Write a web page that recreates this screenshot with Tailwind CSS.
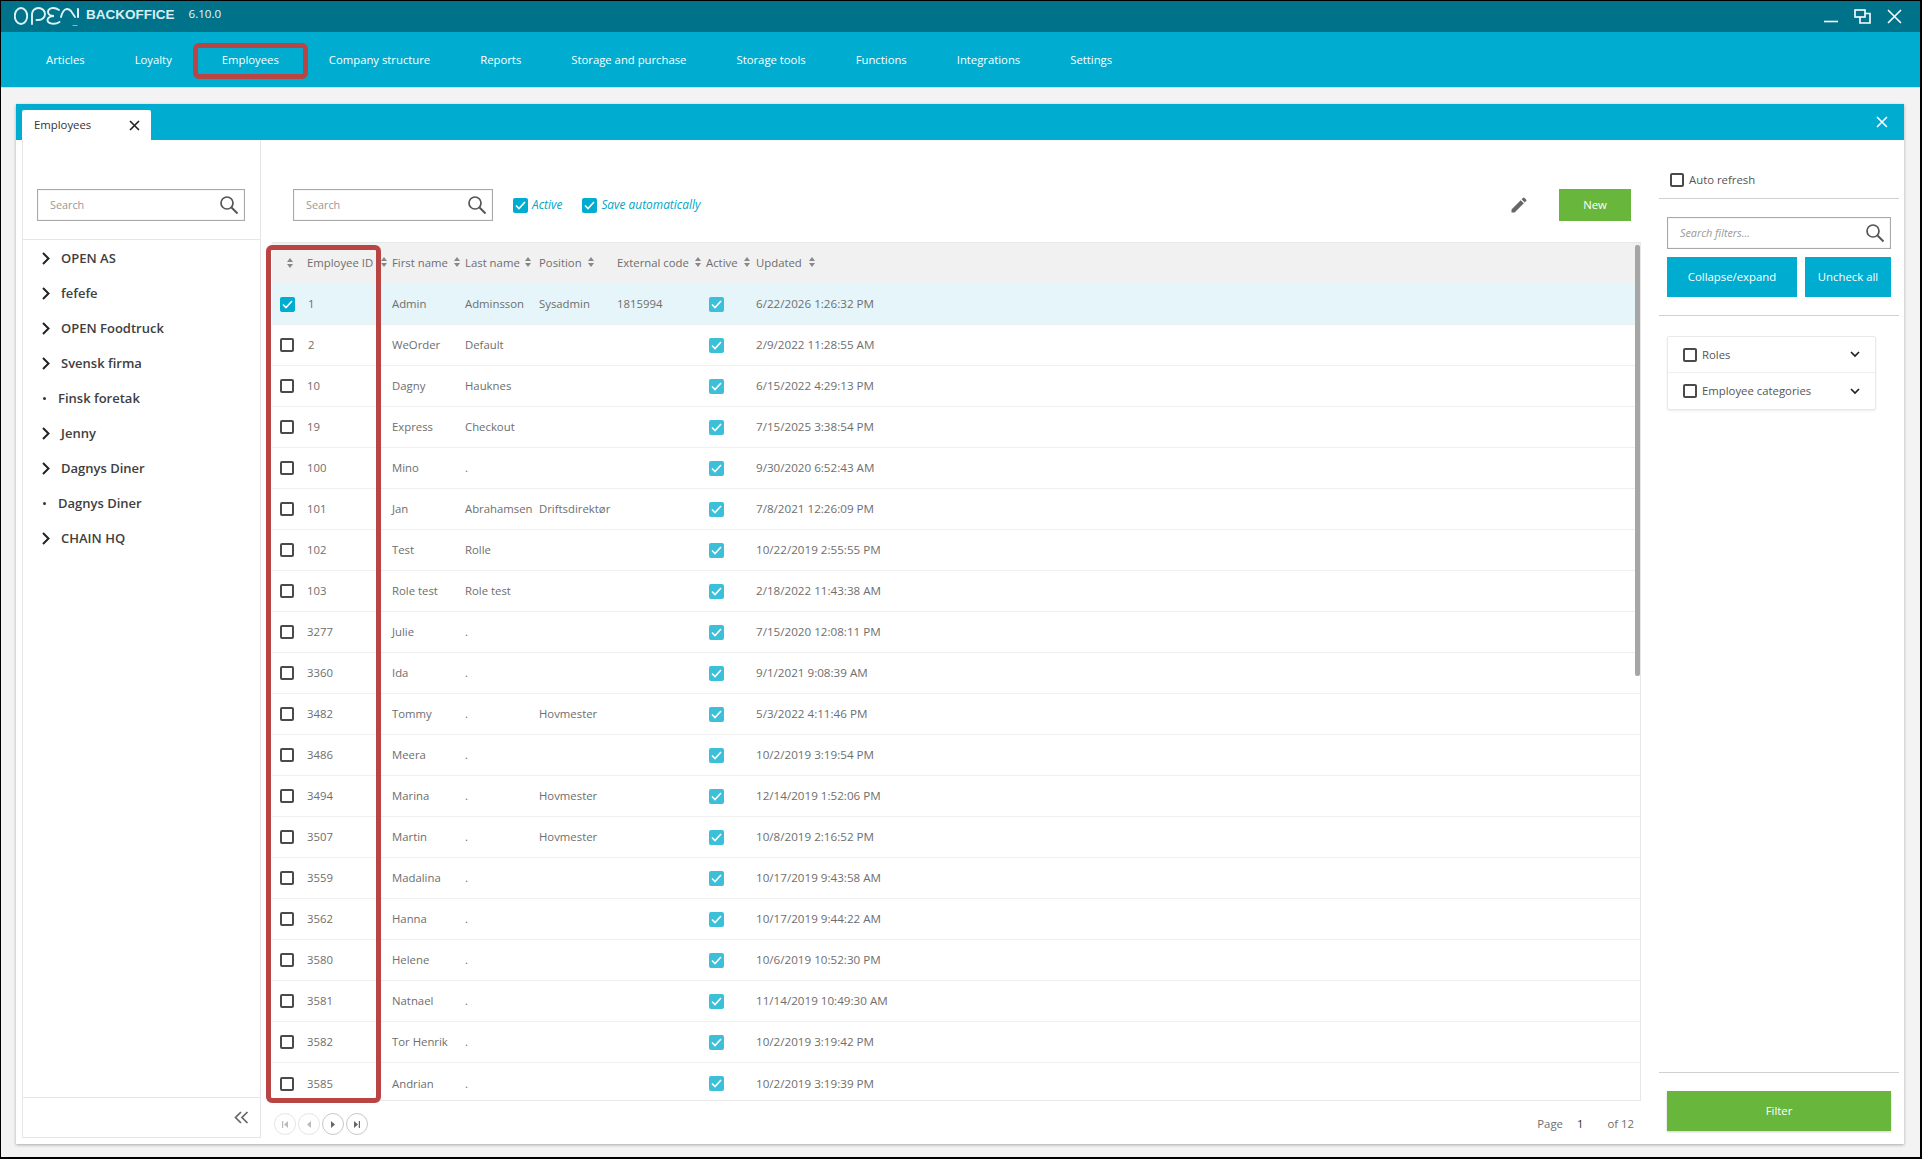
<!DOCTYPE html>
<html><head><meta charset="utf-8"><script src="https://cdn.jsdelivr.net/npm/@tailwindcss/browser@4"></script></head>
<body>
<div class="relative w-[1922px] h-[1159px] bg-black pt-px pl-px pr-[2px] pb-[2px] flex flex-col overflow-hidden font-['Open_Sans',sans-serif] text-[11.35px] text-[#6e6e6e]">
  <!-- title bar -->
  <div class="h-[31px] bg-[#00728a] flex items-center text-white shrink-0">
    <svg class="ml-[13px] mt-[1px]" width="68" height="26" viewBox="0 0 68 26" fill="none" stroke="#dff3f6" stroke-width="1.9" stroke-linecap="round"><ellipse cx="7" cy="12" rx="6.2" ry="8"/><path d="M18 20 V10 a6.5 6 0 1 1 6.5 6 h-2"/><path d="M45 6 C40 2.5 34 4 34 8 C34 11 37 12 40 12 C36 12 33.5 14 33.5 16 C33.5 20 41 21 45.5 18"/><path d="M47 13 C49 5 53 3 57 7 L61 13"/><path d="M64 5 V13" stroke-width="2"/><path d="M59 21.5 H63" stroke-width="0.8" stroke="#9fd3dc"/></svg>
    <span class="ml-[4px] mb-[3px] text-[13.5px] font-semibold text-[#d8f0f5] font-['Liberation_Sans',sans-serif]">BACKOFFICE</span>
    <span class="ml-[14px] mb-[5px] text-[11.6px] text-[#e6f6f9]">6.10.0</span>
    <div class="ml-auto flex items-center pr-[18px] gap-[16px]">
      <svg width="15" height="15" viewBox="0 0 15 15"><path d="M1 12.5 H15" stroke="#fff" stroke-width="1.6"/></svg>
      <svg width="17" height="15" viewBox="0 0 17 15" fill="none" stroke="#fff" stroke-width="1.6"><rect x="1" y="1" width="10" height="7"/><path d="M11 4.5 H16 V14 H6 V8"/></svg>
      <svg width="15" height="15" viewBox="0 0 15 15" fill="none" stroke="#fff" stroke-width="1.6"><path d="M1 1 L14 14 M14 1 L1 14"/></svg>
    </div>
  </div>
  <!-- nav -->
  <div class="h-[56px] bg-[#00acd0] flex items-center gap-[50px] pl-[45px] pt-px text-white text-[11.3px] shrink-0 border-b border-[#d9d9d9]">
    <span>Articles</span><span>Loyalty</span><span>Employees</span><span>Company structure</span><span>Reports</span><span>Storage and purchase</span><span>Storage tools</span><span>Functions</span><span>Integrations</span><span>Settings</span>
  </div>
  <!-- workspace -->
  <div class="flex-1 bg-[#f3f3f3] pt-[16px] pl-[15px] pr-[16px] pb-[13px] flex min-h-0">
    <div class="flex-1 flex flex-col bg-white shadow-[0_1px_3px_rgba(0,0,0,0.3)] min-w-0">
      <div class="h-[36px] bg-[#00acd0] shrink-0 flex items-end pl-[6px] pr-[16px]">
        <div class="w-[129px] h-[30px] bg-white flex items-center justify-between pl-[12px] pr-[11px] text-[#333] rounded-t-[2px]">
          <span>Employees</span>
          <svg width="11" height="11" viewBox="0 0 11 11" fill="none" stroke="#222" stroke-width="1.6"><path d="M1 1 L10 10 M10 1 L1 10"/></svg>
        </div>
        <svg class="ml-auto self-center" width="12" height="12" viewBox="0 0 12 12" fill="none" stroke="#fff" stroke-width="1.6"><path d="M1 1 L11 11 M11 1 L1 11"/></svg>
      </div>
      <div class="flex-1 flex min-h-0">
        <!-- tree -->
        <div class="ml-[6px] mb-[6px] w-[239px] shrink-0 border border-t-0 border-[#e6e6e6] flex flex-col">
          <div class="h-[100px] shrink-0 border-b border-[#e6e6e6] pl-[14px] pt-[49px]">
            <div class="w-[208px] h-[32px] border border-[#a8a8a8] shadow-[inset_0_0_1px_#aaa] flex items-center justify-between pl-[12px] pr-[5px] text-[#999] text-[10.8px]">
              <span>Search</span>
              <svg width="20" height="20" viewBox="0 0 20 20" fill="none" stroke="#555" stroke-width="1.7"><circle cx="8" cy="8" r="6"/><path d="M12.5 12.5 L18.5 18.5" stroke-width="2"/></svg>
            </div>
          </div>
          <div class="flex-1 pt-px text-[13px] font-semibold text-[#404040]">
            <div class="h-[35px] flex items-center pl-[19px] gap-[11px]"><svg width="8" height="13" viewBox="0 0 8 13" fill="none" stroke="#222" stroke-width="2"><path d="M1 1 L6.5 6.5 L1 12"/></svg><span>OPEN AS</span></div>
            <div class="h-[35px] flex items-center pl-[19px] gap-[11px]"><svg width="8" height="13" viewBox="0 0 8 13" fill="none" stroke="#222" stroke-width="2"><path d="M1 1 L6.5 6.5 L1 12"/></svg><span>fefefe</span></div>
            <div class="h-[35px] flex items-center pl-[19px] gap-[11px]"><svg width="8" height="13" viewBox="0 0 8 13" fill="none" stroke="#222" stroke-width="2"><path d="M1 1 L6.5 6.5 L1 12"/></svg><span>OPEN Foodtruck</span></div>
            <div class="h-[35px] flex items-center pl-[19px] gap-[11px]"><svg width="8" height="13" viewBox="0 0 8 13" fill="none" stroke="#222" stroke-width="2"><path d="M1 1 L6.5 6.5 L1 12"/></svg><span>Svensk firma</span></div>
            <div class="h-[35px] flex items-center pl-[20px] gap-[12px]"><span class="w-[3px] h-[3px] rounded-full bg-[#333]"></span><span>Finsk foretak</span></div>
            <div class="h-[35px] flex items-center pl-[19px] gap-[11px]"><svg width="8" height="13" viewBox="0 0 8 13" fill="none" stroke="#222" stroke-width="2"><path d="M1 1 L6.5 6.5 L1 12"/></svg><span>Jenny</span></div>
            <div class="h-[35px] flex items-center pl-[19px] gap-[11px]"><svg width="8" height="13" viewBox="0 0 8 13" fill="none" stroke="#222" stroke-width="2"><path d="M1 1 L6.5 6.5 L1 12"/></svg><span>Dagnys Diner</span></div>
            <div class="h-[35px] flex items-center pl-[20px] gap-[12px]"><span class="w-[3px] h-[3px] rounded-full bg-[#333]"></span><span>Dagnys Diner</span></div>
            <div class="h-[35px] flex items-center pl-[19px] gap-[11px]"><svg width="8" height="13" viewBox="0 0 8 13" fill="none" stroke="#222" stroke-width="2"><path d="M1 1 L6.5 6.5 L1 12"/></svg><span>CHAIN HQ</span></div>
          </div>
          <div class="h-[40px] shrink-0 border-t border-[#e6e6e6] flex items-center justify-end pr-[11px]">
            <svg width="15" height="13" viewBox="0 0 15 13" fill="none" stroke="#666" stroke-width="1.7"><path d="M7 1 L1.5 6.5 L7 12 M13.5 1 L8 6.5 L13.5 12"/></svg>
          </div>
        </div>
        <!-- main -->
        <div class="flex-1 flex flex-col min-w-0 pl-[11px] pr-[10px]">
          <div class="h-[102px] shrink-0 pt-[49px] flex items-start pl-[21px] pr-[10px]">
            <div class="w-[200px] h-[32px] border border-[#a8a8a8] shadow-[inset_0_0_1px_#aaa] flex items-center justify-between pl-[12px] pr-[5px] text-[#999] text-[10.8px]">
              <span>Search</span>
              <svg width="20" height="20" viewBox="0 0 20 20" fill="none" stroke="#555" stroke-width="1.7"><circle cx="8" cy="8" r="6"/><path d="M12.5 12.5 L18.5 18.5" stroke-width="2"/></svg>
            </div>
            <div class="h-[32px] flex items-center ml-[20px] gap-[4px] text-[#00a5c8] italic text-[11.9px]">
              <span class="w-[15px] h-[15px] rounded-[2px] bg-[#00acd0] flex items-center justify-center"><svg width="11" height="9" viewBox="0 0 11 9" fill="none" stroke="#fff" stroke-width="1.6"><path d="M1 4.5 L4 7.5 L10 1"/></svg></span><span>Active</span>
            </div>
            <div class="h-[32px] flex items-center ml-[20px] gap-[4px] text-[#00a5c8] italic text-[11.9px]">
              <span class="w-[15px] h-[15px] rounded-[2px] bg-[#00acd0] flex items-center justify-center"><svg width="11" height="9" viewBox="0 0 11 9" fill="none" stroke="#fff" stroke-width="1.6"><path d="M1 4.5 L4 7.5 L10 1"/></svg></span><span>Save automatically</span>
            </div>
            <div class="ml-auto h-[32px] flex items-center gap-[30px]">
              <svg width="20" height="20" viewBox="0 0 24 24" fill="#666"><path d="M3 17.25V21h3.75L17.81 9.94l-3.75-3.75L3 17.25zM20.71 7.04a1 1 0 0 0 0-1.41l-2.34-2.34a1 1 0 0 0-1.41 0l-1.83 1.83 3.75 3.75 1.83-1.83z"/></svg>
              <div class="w-[72px] h-[32px] bg-[#69b63c] text-white flex items-center justify-center">New</div>
            </div>
          </div>
          <!-- table -->
          <div class="relative h-[859px] shrink-0 overflow-hidden border-t border-r border-b border-[#e8e8e8]">
            <div class="absolute right-0 top-[2px] w-[5px] h-[431px] bg-[#a6a6a6] rounded-[2px] z-10"></div>
            <div class="h-[41px] pb-[2px] bg-[#f1f1f1] grid grid-cols-[35px_85px_73px_74px_78px_89px_50px_1fr] items-center">
              <div class="pl-[15px]"><svg width="6" height="10" viewBox="0 0 6 10" fill="#888"><path d="M3 0 L6 4 H0 Z M3 10 L6 6 H0 Z"/></svg></div>
              <div class="flex items-center justify-between pr-[5px]"><span>Employee ID</span><svg width="6" height="10" viewBox="0 0 6 10" fill="#888"><path d="M3 0 L6 4 H0 Z M3 10 L6 6 H0 Z"/></svg></div>
              <div class="flex items-center justify-between pr-[5px]"><span>First name</span><svg width="6" height="10" viewBox="0 0 6 10" fill="#888"><path d="M3 0 L6 4 H0 Z M3 10 L6 6 H0 Z"/></svg></div>
              <div class="flex items-center justify-between pr-[8px]"><span>Last name</span><svg width="6" height="10" viewBox="0 0 6 10" fill="#888"><path d="M3 0 L6 4 H0 Z M3 10 L6 6 H0 Z"/></svg></div>
              <div class="flex items-center justify-between pr-[23px]"><span>Position</span><svg width="6" height="10" viewBox="0 0 6 10" fill="#888"><path d="M3 0 L6 4 H0 Z M3 10 L6 6 H0 Z"/></svg></div>
              <div class="flex items-center justify-between pr-[5px]"><span>External code</span><svg width="6" height="10" viewBox="0 0 6 10" fill="#888"><path d="M3 0 L6 4 H0 Z M3 10 L6 6 H0 Z"/></svg></div>
              <div class="flex items-center justify-between pr-[6px]"><span>Active</span><svg width="6" height="10" viewBox="0 0 6 10" fill="#888"><path d="M3 0 L6 4 H0 Z M3 10 L6 6 H0 Z"/></svg></div>
              <div class="flex items-center justify-between w-[59px]"><span>Updated</span><svg width="6" height="10" viewBox="0 0 6 10" fill="#888"><path d="M3 0 L6 4 H0 Z M3 10 L6 6 H0 Z"/></svg></div>
            </div>
            <div class="divide-y divide-[#efefef] border-b border-[#efefef] [&>div]:h-[41px] [&>div]:grid [&>div]:grid-cols-[35px_85px_73px_74px_78px_89px_50px_1fr] [&>div]:items-center">
              <div class="bg-[#e5f5fa]"><div class="pl-[8px]"><span class="w-[15px] h-[15px] rounded-[2px] bg-[#00acd0] flex items-center justify-center"><svg width="11" height="9" viewBox="0 0 11 9" fill="none" stroke="#fff" stroke-width="1.6"><path d="M1 4.5 L4 7.5 L10 1"/></svg></span></div><div class="pl-px">1</div><div>Admin</div><div>Adminsson</div><div>Sysadmin</div><div>1815994</div><div class="pl-[3px]"><span class="w-[15px] h-[15px] rounded-[2px] bg-[#3cc0da] flex items-center justify-center"><svg width="11" height="9" viewBox="0 0 11 9" fill="none" stroke="#fff" stroke-width="1.6"><path d="M1 4.5 L4 7.5 L10 1"/></svg></span></div><div class="text-[11.65px]">6/22/2026 1:26:32 PM</div></div>
              <div><div class="pl-[8px]"><span class="block w-[14px] h-[14px] border-2 border-[#4a4a4a] rounded-[2px]"></span></div><div class="pl-px">2</div><div>WeOrder</div><div>Default</div><div></div><div></div><div class="pl-[3px]"><span class="w-[15px] h-[15px] rounded-[2px] bg-[#3cc0da] flex items-center justify-center"><svg width="11" height="9" viewBox="0 0 11 9" fill="none" stroke="#fff" stroke-width="1.6"><path d="M1 4.5 L4 7.5 L10 1"/></svg></span></div><div class="text-[11.65px]">2/9/2022 11:28:55 AM</div></div>
              <div><div class="pl-[8px]"><span class="block w-[14px] h-[14px] border-2 border-[#4a4a4a] rounded-[2px]"></span></div><div>10</div><div>Dagny</div><div>Hauknes</div><div></div><div></div><div class="pl-[3px]"><span class="w-[15px] h-[15px] rounded-[2px] bg-[#3cc0da] flex items-center justify-center"><svg width="11" height="9" viewBox="0 0 11 9" fill="none" stroke="#fff" stroke-width="1.6"><path d="M1 4.5 L4 7.5 L10 1"/></svg></span></div><div class="text-[11.65px]">6/15/2022 4:29:13 PM</div></div>
              <div><div class="pl-[8px]"><span class="block w-[14px] h-[14px] border-2 border-[#4a4a4a] rounded-[2px]"></span></div><div>19</div><div>Express</div><div>Checkout</div><div></div><div></div><div class="pl-[3px]"><span class="w-[15px] h-[15px] rounded-[2px] bg-[#3cc0da] flex items-center justify-center"><svg width="11" height="9" viewBox="0 0 11 9" fill="none" stroke="#fff" stroke-width="1.6"><path d="M1 4.5 L4 7.5 L10 1"/></svg></span></div><div class="text-[11.65px]">7/15/2025 3:38:54 PM</div></div>
              <div><div class="pl-[8px]"><span class="block w-[14px] h-[14px] border-2 border-[#4a4a4a] rounded-[2px]"></span></div><div>100</div><div>Mino</div><div>.</div><div></div><div></div><div class="pl-[3px]"><span class="w-[15px] h-[15px] rounded-[2px] bg-[#3cc0da] flex items-center justify-center"><svg width="11" height="9" viewBox="0 0 11 9" fill="none" stroke="#fff" stroke-width="1.6"><path d="M1 4.5 L4 7.5 L10 1"/></svg></span></div><div class="text-[11.65px]">9/30/2020 6:52:43 AM</div></div>
              <div><div class="pl-[8px]"><span class="block w-[14px] h-[14px] border-2 border-[#4a4a4a] rounded-[2px]"></span></div><div>101</div><div>Jan</div><div>Abrahamsen</div><div>Driftsdirektør</div><div></div><div class="pl-[3px]"><span class="w-[15px] h-[15px] rounded-[2px] bg-[#3cc0da] flex items-center justify-center"><svg width="11" height="9" viewBox="0 0 11 9" fill="none" stroke="#fff" stroke-width="1.6"><path d="M1 4.5 L4 7.5 L10 1"/></svg></span></div><div class="text-[11.65px]">7/8/2021 12:26:09 PM</div></div>
              <div><div class="pl-[8px]"><span class="block w-[14px] h-[14px] border-2 border-[#4a4a4a] rounded-[2px]"></span></div><div>102</div><div>Test</div><div>Rolle</div><div></div><div></div><div class="pl-[3px]"><span class="w-[15px] h-[15px] rounded-[2px] bg-[#3cc0da] flex items-center justify-center"><svg width="11" height="9" viewBox="0 0 11 9" fill="none" stroke="#fff" stroke-width="1.6"><path d="M1 4.5 L4 7.5 L10 1"/></svg></span></div><div class="text-[11.65px]">10/22/2019 2:55:55 PM</div></div>
              <div><div class="pl-[8px]"><span class="block w-[14px] h-[14px] border-2 border-[#4a4a4a] rounded-[2px]"></span></div><div>103</div><div>Role test</div><div>Role test</div><div></div><div></div><div class="pl-[3px]"><span class="w-[15px] h-[15px] rounded-[2px] bg-[#3cc0da] flex items-center justify-center"><svg width="11" height="9" viewBox="0 0 11 9" fill="none" stroke="#fff" stroke-width="1.6"><path d="M1 4.5 L4 7.5 L10 1"/></svg></span></div><div class="text-[11.65px]">2/18/2022 11:43:38 AM</div></div>
              <div><div class="pl-[8px]"><span class="block w-[14px] h-[14px] border-2 border-[#4a4a4a] rounded-[2px]"></span></div><div>3277</div><div>Julie</div><div>.</div><div></div><div></div><div class="pl-[3px]"><span class="w-[15px] h-[15px] rounded-[2px] bg-[#3cc0da] flex items-center justify-center"><svg width="11" height="9" viewBox="0 0 11 9" fill="none" stroke="#fff" stroke-width="1.6"><path d="M1 4.5 L4 7.5 L10 1"/></svg></span></div><div class="text-[11.65px]">7/15/2020 12:08:11 PM</div></div>
              <div><div class="pl-[8px]"><span class="block w-[14px] h-[14px] border-2 border-[#4a4a4a] rounded-[2px]"></span></div><div>3360</div><div>Ida</div><div>.</div><div></div><div></div><div class="pl-[3px]"><span class="w-[15px] h-[15px] rounded-[2px] bg-[#3cc0da] flex items-center justify-center"><svg width="11" height="9" viewBox="0 0 11 9" fill="none" stroke="#fff" stroke-width="1.6"><path d="M1 4.5 L4 7.5 L10 1"/></svg></span></div><div class="text-[11.65px]">9/1/2021 9:08:39 AM</div></div>
              <div><div class="pl-[8px]"><span class="block w-[14px] h-[14px] border-2 border-[#4a4a4a] rounded-[2px]"></span></div><div>3482</div><div>Tommy</div><div>.</div><div>Hovmester</div><div></div><div class="pl-[3px]"><span class="w-[15px] h-[15px] rounded-[2px] bg-[#3cc0da] flex items-center justify-center"><svg width="11" height="9" viewBox="0 0 11 9" fill="none" stroke="#fff" stroke-width="1.6"><path d="M1 4.5 L4 7.5 L10 1"/></svg></span></div><div class="text-[11.65px]">5/3/2022 4:11:46 PM</div></div>
              <div><div class="pl-[8px]"><span class="block w-[14px] h-[14px] border-2 border-[#4a4a4a] rounded-[2px]"></span></div><div>3486</div><div>Meera</div><div>.</div><div></div><div></div><div class="pl-[3px]"><span class="w-[15px] h-[15px] rounded-[2px] bg-[#3cc0da] flex items-center justify-center"><svg width="11" height="9" viewBox="0 0 11 9" fill="none" stroke="#fff" stroke-width="1.6"><path d="M1 4.5 L4 7.5 L10 1"/></svg></span></div><div class="text-[11.65px]">10/2/2019 3:19:54 PM</div></div>
              <div><div class="pl-[8px]"><span class="block w-[14px] h-[14px] border-2 border-[#4a4a4a] rounded-[2px]"></span></div><div>3494</div><div>Marina</div><div>.</div><div>Hovmester</div><div></div><div class="pl-[3px]"><span class="w-[15px] h-[15px] rounded-[2px] bg-[#3cc0da] flex items-center justify-center"><svg width="11" height="9" viewBox="0 0 11 9" fill="none" stroke="#fff" stroke-width="1.6"><path d="M1 4.5 L4 7.5 L10 1"/></svg></span></div><div class="text-[11.65px]">12/14/2019 1:52:06 PM</div></div>
              <div><div class="pl-[8px]"><span class="block w-[14px] h-[14px] border-2 border-[#4a4a4a] rounded-[2px]"></span></div><div>3507</div><div>Martin</div><div>.</div><div>Hovmester</div><div></div><div class="pl-[3px]"><span class="w-[15px] h-[15px] rounded-[2px] bg-[#3cc0da] flex items-center justify-center"><svg width="11" height="9" viewBox="0 0 11 9" fill="none" stroke="#fff" stroke-width="1.6"><path d="M1 4.5 L4 7.5 L10 1"/></svg></span></div><div class="text-[11.65px]">10/8/2019 2:16:52 PM</div></div>
              <div><div class="pl-[8px]"><span class="block w-[14px] h-[14px] border-2 border-[#4a4a4a] rounded-[2px]"></span></div><div>3559</div><div>Madalina</div><div>.</div><div></div><div></div><div class="pl-[3px]"><span class="w-[15px] h-[15px] rounded-[2px] bg-[#3cc0da] flex items-center justify-center"><svg width="11" height="9" viewBox="0 0 11 9" fill="none" stroke="#fff" stroke-width="1.6"><path d="M1 4.5 L4 7.5 L10 1"/></svg></span></div><div class="text-[11.65px]">10/17/2019 9:43:58 AM</div></div>
              <div><div class="pl-[8px]"><span class="block w-[14px] h-[14px] border-2 border-[#4a4a4a] rounded-[2px]"></span></div><div>3562</div><div>Hanna</div><div>.</div><div></div><div></div><div class="pl-[3px]"><span class="w-[15px] h-[15px] rounded-[2px] bg-[#3cc0da] flex items-center justify-center"><svg width="11" height="9" viewBox="0 0 11 9" fill="none" stroke="#fff" stroke-width="1.6"><path d="M1 4.5 L4 7.5 L10 1"/></svg></span></div><div class="text-[11.65px]">10/17/2019 9:44:22 AM</div></div>
              <div><div class="pl-[8px]"><span class="block w-[14px] h-[14px] border-2 border-[#4a4a4a] rounded-[2px]"></span></div><div>3580</div><div>Helene</div><div>.</div><div></div><div></div><div class="pl-[3px]"><span class="w-[15px] h-[15px] rounded-[2px] bg-[#3cc0da] flex items-center justify-center"><svg width="11" height="9" viewBox="0 0 11 9" fill="none" stroke="#fff" stroke-width="1.6"><path d="M1 4.5 L4 7.5 L10 1"/></svg></span></div><div class="text-[11.65px]">10/6/2019 10:52:30 PM</div></div>
              <div><div class="pl-[8px]"><span class="block w-[14px] h-[14px] border-2 border-[#4a4a4a] rounded-[2px]"></span></div><div>3581</div><div>Natnael</div><div>.</div><div></div><div></div><div class="pl-[3px]"><span class="w-[15px] h-[15px] rounded-[2px] bg-[#3cc0da] flex items-center justify-center"><svg width="11" height="9" viewBox="0 0 11 9" fill="none" stroke="#fff" stroke-width="1.6"><path d="M1 4.5 L4 7.5 L10 1"/></svg></span></div><div class="text-[11.65px]">11/14/2019 10:49:30 AM</div></div>
              <div><div class="pl-[8px]"><span class="block w-[14px] h-[14px] border-2 border-[#4a4a4a] rounded-[2px]"></span></div><div>3582</div><div>Tor Henrik</div><div>.</div><div></div><div></div><div class="pl-[3px]"><span class="w-[15px] h-[15px] rounded-[2px] bg-[#3cc0da] flex items-center justify-center"><svg width="11" height="9" viewBox="0 0 11 9" fill="none" stroke="#fff" stroke-width="1.6"><path d="M1 4.5 L4 7.5 L10 1"/></svg></span></div><div class="text-[11.65px]">10/2/2019 3:19:42 PM</div></div>
              <div><div class="pl-[8px]"><span class="block w-[14px] h-[14px] border-2 border-[#4a4a4a] rounded-[2px]"></span></div><div>3585</div><div>Andrian</div><div>.</div><div></div><div></div><div class="pl-[3px]"><span class="w-[15px] h-[15px] rounded-[2px] bg-[#3cc0da] flex items-center justify-center"><svg width="11" height="9" viewBox="0 0 11 9" fill="none" stroke="#fff" stroke-width="1.6"><path d="M1 4.5 L4 7.5 L10 1"/></svg></span></div><div class="text-[11.65px]">10/2/2019 3:19:39 PM</div></div>
            </div>
          </div>
          <!-- pager -->
          <div class="flex-1 flex items-center justify-between pl-[2px] pr-[7px] pt-[3px]">
            <div class="flex items-center gap-[2px]">
              <span class="w-[22px] h-[22px] rounded-full border border-[#e6e6e6] flex items-center justify-center"><svg width="6" height="7" viewBox="0 0 6 7" fill="#bbb"><path d="M0 0 H1.2 V7 H0 Z M6 0 V7 L2 3.5 Z"/></svg></span>
              <span class="w-[22px] h-[22px] rounded-full border border-[#e6e6e6] flex items-center justify-center"><svg width="4" height="7" viewBox="0 0 4 7" fill="#bbb"><path d="M4 0 V7 L0 3.5 Z"/></svg></span>
              <span class="w-[22px] h-[22px] rounded-full border border-[#c8c8c8] flex items-center justify-center"><svg width="4" height="7" viewBox="0 0 4 7" fill="#666"><path d="M0 0 V7 L4 3.5 Z"/></svg></span>
              <span class="w-[22px] h-[22px] rounded-full border border-[#c8c8c8] flex items-center justify-center"><svg width="6" height="7" viewBox="0 0 6 7" fill="#666"><path d="M6 0 H4.8 V7 H6 Z M0 0 V7 L4 3.5 Z"/></svg></span>
            </div>
            <div class="flex items-center"><span>Page</span><span class="ml-[14px] mr-[24px] text-[#333]">1</span><span>of 12</span></div>
          </div>
        </div>
        <!-- filters -->
        <div class="w-[253px] shrink-0 flex flex-col pl-[8px] pr-[5px]">
          <div class="h-[59px] shrink-0 border-b border-[#d0d0d0] pt-[33px] pl-[11px] flex items-start gap-[5px] text-[#555]">
            <span class="w-[14px] h-[14px] border-2 border-[#4a4a4a] rounded-[2px]"></span><span class="leading-[14px]">Auto refresh</span>
          </div>
          <div class="h-[117px] shrink-0 border-b border-[#d0d0d0] pt-[18px] px-[8px]">
            <div class="h-[32px] w-[224px] border border-[#a8a8a8] shadow-[inset_0_0_1px_#aaa] flex items-center justify-between pl-[12px] pr-[5px] text-[#999] text-[10.8px] italic">
              <span>Search filters...</span>
              <svg width="20" height="20" viewBox="0 0 20 20" fill="none" stroke="#555" stroke-width="1.7"><circle cx="8" cy="8" r="6"/><path d="M12.5 12.5 L18.5 18.5" stroke-width="2"/></svg>
            </div>
            <div class="flex gap-[8px] mt-[8px]">
              <div class="w-[130px] h-[40px] bg-[#00acd0] text-white flex items-center justify-center">Collapse/expand</div>
              <div class="w-[86px] h-[40px] bg-[#00acd0] text-white flex items-center justify-center">Uncheck all</div>
            </div>
          </div>
          <div class="mt-[20px] ml-[8px] w-[209px] h-[74px] shrink-0 border border-[#e8e8e8] rounded-[2px] shadow-[0_1px_2px_rgba(0,0,0,0.08)] text-[#555]">
            <div class="h-[36px] border-b border-[#eee] flex items-center pl-[15px] pr-[15px] gap-[5px]"><span class="w-[14px] h-[14px] border-2 border-[#4a4a4a] rounded-[2px]"></span><span>Roles</span><svg class="ml-auto" width="10" height="7" viewBox="0 0 10 7" fill="none" stroke="#222" stroke-width="1.7"><path d="M1 1 L5 5 L9 1"/></svg></div>
            <div class="h-[36px] flex items-center pl-[15px] pr-[15px] gap-[5px]"><span class="w-[14px] h-[14px] border-2 border-[#4a4a4a] rounded-[2px]"></span><span>Employee categories</span><svg class="ml-auto" width="10" height="7" viewBox="0 0 10 7" fill="none" stroke="#222" stroke-width="1.7"><path d="M1 1 L5 5 L9 1"/></svg></div>
          </div>
          <div class="mt-auto h-[72px] shrink-0 border-t border-[#d0d0d0] pt-[18px] px-[8px]">
            <div class="w-[224px] h-[40px] bg-[#69b63c] text-white flex items-center justify-center shadow-[0_1px_2px_rgba(0,0,0,0.2)]">Filter</div>
          </div>
        </div>
      </div>
    </div>
  </div>
  <!-- red annotations -->
  <div class="absolute left-[193px] top-[43px] w-[115px] h-[36px] border-[5px] border-[#b94444] rounded-[6px]"></div>
  <div class="absolute left-[266px] top-[245px] w-[115px] h-[858px] border-[5px] border-[#b94444] rounded-[6px]"></div>
</div>
</body></html>
